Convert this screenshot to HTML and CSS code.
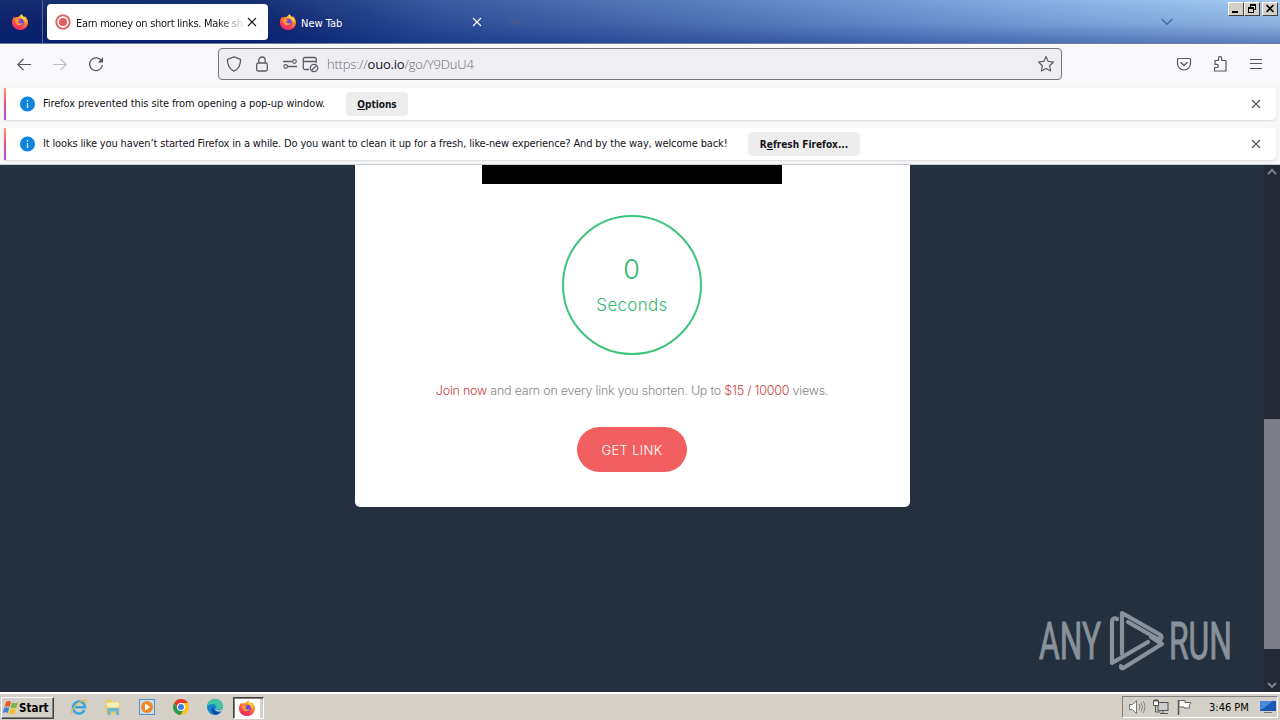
FILE: index.html
```html
<!DOCTYPE html>
<html lang="en">
<head>
<meta charset="utf-8">
<title>Earn money on short links</title>
<link rel="stylesheet" href="styles.css">
</head>
<body>
<svg class="defs" width="0" height="0" aria-hidden="true">
  <defs>
    <linearGradient id="ffg" x1="0.8" y1="0" x2="0.3" y2="1"><stop offset="0" stop-color="#ffe14a"/><stop offset=".4" stop-color="#ff8a2a"/><stop offset=".75" stop-color="#fb3e50"/><stop offset="1" stop-color="#e3246e"/></linearGradient>
    <symbol id="fox" viewBox="0 0 16 16">
      <path d="M9.6 0c.3 1.500 1.500 2.200 2.500 3.200.5-.1.6-.9.600-1.200C14.500 3.600 16 6 16 8.400 16 12.700 12.400 16 8 16S0 12.700 0 8.500C0 6 .8 4 2.200 2.400c0 .6.100 1.100.4 1.500C3.600 3 5 3 6 3.300 7.200 2.400 8.200 1.500 9.600 0z" fill="url(#ffg)"/>
      <circle cx="8.300" cy="8.300" r="3.500" fill="#7542e5"/>
      <path d="M3 5.500c2-.8 3.400.1 5.200.6-.3 1-1.700 1-2 1.700.6 1.800 3 2.300 4.800.9-.8 2.900-5.300 3.500-7 .8C3.200 8.300 3 7 3 5.500z" fill="#ff9a30"/>
      <path d="M9.600 0c.3 1.500 1.500 2.200 2.500 3.200 1.500 1.700 2 3.800 1.300 5.800-.4-2.400-1.800-4-3.500-4.800C8.700 3.300 8.600 1.600 9.600 0z" fill="#ffd83f"/>
    </symbol>
    <symbol id="cross" viewBox="0 0 10 10"><path d="M1 1l8 8M9 1l-8 8" fill="none" stroke="currentColor" stroke-width="1.100"/></symbol>
  </defs>
</svg>
<header class="tabbar">
  <div class="pinned"><svg width="16" height="16"><use href="#fox"/></svg></div>
  <div class="tab tab-active">
    <svg width="16" height="16" viewBox="0 0 16 16"><circle cx="8" cy="8" r="6.700" fill="#fff" stroke="#dd6a6a" stroke-width="2"/><circle cx="8" cy="8" r="4" fill="#e25d5d"/></svg>
    <span class="tab-title t-earn">Earn money on short links. Make sh</span>
    <svg class="tab-x" width="10" height="10"><use href="#cross"/></svg>
  </div>
  <div class="tab tab-idle">
    <svg width="16" height="16"><use href="#fox"/></svg>
    <span class="tab-title">New Tab</span>
    <svg class="tab-x" width="10" height="10"><use href="#cross"/></svg>
  </div>
  <svg class="plus" width="10" height="10" viewBox="0 0 10 10"><path d="M5 0v10M0 5h10" stroke="#525d7c"/></svg>
  <svg class="chev" width="12" height="8" viewBox="0 0 12 8"><path d="M.7 1L6 6.300 11.300 1" fill="none" stroke="#4b6a9c" stroke-width="1.400"/></svg>
  <div class="winbtns">
    <div class="wb"><svg width="14" height="12" viewBox="0 0 14 12"><path d="M3 8h6v2H3z"/></svg></div>
    <div class="wb"><svg width="14" height="12" viewBox="0 0 14 12"><path d="M5 1h6v6H9V6h1V3H6v1H5zM3 4h6v6H3zM4 6v3h4V6z" fill-rule="evenodd"/></svg></div>
    <div class="wb wb-close"><svg width="14" height="12" viewBox="0 0 14 12"><path d="M3.500 2l7 7M10.500 2l-7 7" stroke="#000" stroke-width="1.600"/></svg></div>
  </div>
</header>
<nav class="toolbar">
  <svg class="back" width="16" height="16" viewBox="0 0 16 16"><path d="M15 8.500H2M7.500 3L1.800 8.500l5.700 5.500" fill="none" stroke="#55555e" stroke-width="1.200"/></svg>
  <svg class="fwd" width="16" height="16" viewBox="0 0 16 16"><path d="M1 8.500h13M8.500 3L14.200 8.500l-5.700 5.500" fill="none" stroke="#c2c2c8" stroke-width="1.200"/></svg>
  <svg class="reload" width="16" height="16" viewBox="0 0 16 16"><path d="M13.600 5A6.400 6.400 0 1 0 14.400 9" fill="none" stroke="#55555e" stroke-width="1.300"/><path d="M15 1.300v5.200H9.800z" fill="#55555e"/></svg>
  <div class="urlbar">
    <svg width="16" height="16" viewBox="0 0 16 16"><path d="M8 .9l6.500 2.500c.2 5-1.500 9.500-6.500 11.700C3 12.900 1.300 8.400 1.500 3.400z" fill="none" stroke="#5b5b66" stroke-width="1.300" stroke-linejoin="round"/></svg>
    <svg class="lock" width="16" height="16" viewBox="0 0 16 16"><rect x="2.700" y="7" width="10.600" height="8" rx="1.500" fill="none" stroke="#5b5b66" stroke-width="1.300"/><path d="M4.800 7V4.200a3.200 3.200 0 0 1 6.400 0V7" fill="none" stroke="#5b5b66" stroke-width="1.300"/></svg>
    <svg class="perm" width="16" height="16" viewBox="0 0 16 16"><path d="M1 5.500h9M6 10.500h9" stroke="#5b5b66" stroke-width="1.300"/><circle cx="12.500" cy="5.500" r="1.800" fill="none" stroke="#5b5b66" stroke-width="1.200"/><circle cx="3.700" cy="10.500" r="1.800" fill="none" stroke="#5b5b66" stroke-width="1.200"/></svg>
    <svg class="popup" width="17" height="17" viewBox="0 0 17 17"><path d="M7 13.500H3A1.700 1.700 0 0 1 1.300 12V3A1.700 1.700 0 0 1 3 1.500h9.500A1.700 1.700 0 0 1 14.200 3v4M1.300 5.500h13" fill="none" stroke="#5b5b66" stroke-width="1.300"/><circle cx="12" cy="12" r="3.700" fill="#efeff3" stroke="#5b5b66" stroke-width="1.300"/><path d="M9.500 14.500l5-5" stroke="#5b5b66" stroke-width="1.200"/></svg>
    <span class="url">https://<b>ouo.io</b>/go/Y9DuU4</span>
    <svg class="star" width="18" height="18" viewBox="0 0 18 18"><path d="M9 1.500l2.200 4.900 5.300.6-3.900 3.700 1 5.300L9 13.400 4.400 16l1-5.300L1.500 7l5.300-.6z" fill="none" stroke="#5b5b66" stroke-width="1.200" stroke-linejoin="round"/></svg>
  </div>
  <div class="tools">
    <svg width="16" height="16" viewBox="0 0 16 16"><path d="M2.500 2.500h11a1 1 0 0 1 1 1v4a6.500 6.500 0 0 1-13 0v-4a1 1 0 0 1 1-1z" fill="none" stroke="#55555e" stroke-width="1.200"/><path d="M4.700 6.300L8 9.500l3.300-3.200" fill="none" stroke="#55555e" stroke-width="1.300"/></svg>
    <svg width="16" height="16" viewBox="0 0 16 16"><path d="M3 4.500h3.500V2.300a1.600 1.600 0 0 1 3.200 0v2.200h4.300V15H2.500V11.500h2.200a1.500 1.500 0 0 0 0-3.200H3z" fill="none" stroke="#55555e" stroke-width="1.200" stroke-linejoin="round"/></svg>
    <svg width="16" height="16" viewBox="0 0 16 16"><path d="M2 3.500h12M2 7.500h12M2 12.500h12" stroke="#55555e" stroke-width="1.200"/></svg>
  </div>
</nav>
<section class="notices">
  <div class="notice">
    <svg width="16" height="16" viewBox="0 0 16 16"><circle cx="7.500" cy="8" r="7.500" fill="#0a84e0"/><path d="M7.500 4v1.500M7.500 7v5" stroke="#fff" stroke-width="1.200"/></svg>
    <span class="msg m1">Firefox prevented this site from opening a pop-up window.</span>
    <button class="btn b1"><u>O</u>ptions</button>
    <svg class="nx" width="10" height="10"><use href="#cross"/></svg>
  </div>
  <div class="notice">
    <svg width="16" height="16" viewBox="0 0 16 16"><circle cx="7.500" cy="8" r="7.500" fill="#0a84e0"/><path d="M7.500 4v1.500M7.500 7v5" stroke="#fff" stroke-width="1.200"/></svg>
    <span class="msg m2">It looks like you haven’t started Firefox in a while. Do you want to clean it up for a fresh, like-new experience? And by the way, welcome back!</span>
    <button class="btn b2">R<u>e</u>fresh Firefox...</button>
    <svg class="nx" width="10" height="10"><use href="#cross"/></svg>
  </div>
</section>
<div class="viewport">
  <main class="page">
    <div class="card">
      <div class="ad"></div>
      <div class="timer"><span class="num">0</span><span class="sec">Seconds</span></div>
      <p class="join"><em>Join now</em> and earn on every link you shorten. Up to <em>$15 / 10000</em> views.</p>
      <button class="get"><span>GET LINK</span></button>
    </div>
    <svg class="watermark" width="210" height="70" viewBox="0 0 210 70">
      <g fill="#89919b" stroke="#89919b" stroke-width="1" font-family="Roboto" font-size="51">
        <text x="2" y="51" textLength="62" lengthAdjust="spacingAndGlyphs">ANY</text>
        <text x="132" y="51" textLength="63" lengthAdjust="spacingAndGlyphs">RUN</text>
      </g>
      <g fill="none" stroke="#89919b" stroke-width="4.200" stroke-linejoin="round" stroke-linecap="round">
        <path d="M80 11Q75 9 75 14V55L111 34"/>
        <path d="M85 46V5L122 26Q126 29 124 31Q122 32 119 30L91 14"/>
        <path d="M114 29L125 36L88 59Q84 62 84 58"/>
      </g>
    </svg>
  </main>
  <div class="scroll">
    <svg width="16" height="14" viewBox="0 0 16 14"><path d="M4 9l4-4 4 4" fill="none" stroke="#788089" stroke-width="2"/></svg>
    <div class="thumb"></div>
    <svg class="down" width="16" height="14" viewBox="0 0 16 14"><path d="M4 5l4 4 4-4" fill="none" stroke="#788089" stroke-width="2"/></svg>
  </div>
</div>
<footer class="taskbar">
  <div class="start">
    <svg width="17" height="16" viewBox="0 0 17 16"><path d="M4 2q3-2 5 0L7.500 7q-2-1.500-5 0z" fill="#e8572b"/><path d="M10 2.500q3 1.500 6 0L14.500 7.500q-3 1.500-6 0z" fill="#7cb843"/><path d="M2.200 8q3-1.500 5 0L5.700 13q-2-1.500-5 0z" fill="#3d87cf"/><path d="M8.200 8.500q3 1.500 6 0L12.700 13.500q-3 1.500-6 0z" fill="#f6c32c"/></svg>
    <span>Start</span>
  </div>
  <div class="quick">
    <svg width="18" height="18" viewBox="0 0 18 18"><path d="M14.500 12A6 6 0 1 1 15 9.300H5" fill="none" stroke="#3da5dc" stroke-width="2.600"/><path d="M2 15.500C-.5 13 9 2 16 2.200c2 .5-1 4-1 4" fill="none" stroke="#e8bd43" stroke-width="1.200"/></svg>
    <svg width="18" height="18" viewBox="0 0 18 18"><path d="M1.500 2h6l1 2h7.500v12H1.500z" fill="#eccb65"/><path d="M3 4.500h12v5H3z" fill="#f8efb6"/><path d="M3.500 17v-7h11.500v7h-3v-3.500h-5.500V17z" fill="#6ab6dc"/></svg>
    <svg width="18" height="18" viewBox="0 0 18 18"><rect x="1.500" y="1.500" width="15" height="15" fill="#c4def2" stroke="#5c93c4"/><circle cx="9" cy="9" r="6" fill="#f48620"/><path d="M7 5.500l5.500 3.500L7 12.500z" fill="#fff"/></svg>
    <svg width="18" height="18" viewBox="0 0 18 18"><circle cx="9" cy="9" r="8" fill="#fbc51d"/><path d="M2.100 5A8 8 0 0 1 16 5H9L6 11z" fill="#e33b2e"/><path d="M2.100 5A8 8 0 0 0 8.500 17L12 11 6 11z" fill="#279b4a"/><circle cx="9" cy="9" r="4" fill="#fff"/><circle cx="9" cy="9" r="3" fill="#3f7ee8"/></svg>
    <svg width="18" height="18" viewBox="0 0 18 18"><circle cx="9" cy="9" r="8" fill="#1685cf"/><path d="M1.200 8C2 3 5 1 9 1c5 0 8 3.500 8 7s-6 4.500-7 2.500c2-5-5-6-8.800-2.500z" fill="#42c5a0"/><path d="M7.500 9c-1 3 2 6 7 4.500-1 1.700-3 3-5 3.300C5 15 4 10 7.500 9z" fill="#0c4d9b"/><path d="M10 10.500c0 2 4 3 7-.5-.2 2-1 3-2 3.300-3 1-7-1-5-2.800z" fill="#d4d0c8"/></svg>
  </div>
  <div class="task"><svg width="16" height="16"><use href="#fox"/></svg></div>
  <div class="tray">
    <svg width="18" height="16" viewBox="0 0 18 16"><path d="M1.500 5.500h3l4-4v13l-4-4h-3z" fill="#fff" stroke="#777"/><path d="M11 5q2 3 0 6M13 3.500q3 4.500 0 9M15 2q4 6 0 12" fill="none" stroke="#888"/></svg>
    <svg width="18" height="16" viewBox="0 0 18 16"><rect x="6" y="3.500" width="10" height="8" fill="#ccc" stroke="#555"/><path d="M8 14.500h8M11 12v2M3.500 6v7h5" fill="none" stroke="#555"/><path d="M1.500 1.500h5v5h-5zM3 0v3M5 0v3" fill="#fff" stroke="#555"/></svg>
    <svg width="18" height="16" viewBox="0 0 18 16"><path d="M2.500 1v15" stroke="#555" stroke-width="1.500"/><path d="M3 1.500h6v2h6l-2 3 1 2.500H8V8H3z" fill="#fff" stroke="#666"/></svg>
    <span class="clock">3:46 PM</span>
    <svg class="desk" width="16" height="14" viewBox="0 0 16 14"><path d="M0 1h16v10H0z" fill="#1b57b5"/><path d="M0 1h13L4 8 0 10z" fill="#4788dc"/><path d="M4 12h8v1H4z" fill="#777"/></svg>
  </div>
</footer>
</body>
</html>
```
FILE: styles.css
```css
* { box-sizing: border-box; }
body { margin: 0; width: 1280px; height: 720px; overflow: hidden; display: flex; flex-direction: column; font-family: "DejaVu Sans Condensed", "DejaVu Sans", sans-serif; font-size: 11px; color: #15141a; background: #f9f9fb; }
.defs { position: absolute; }
svg { display: block; flex: none; }
button { border: 0; font: inherit; margin: 0; }

.tabbar { height: 44px; flex: none; display: flex; align-items: flex-start; border-bottom: 1px solid #6e7f9e; background: linear-gradient(180deg, rgba(255,255,255,.04), rgba(0,20,100,.12) 55%, rgba(0,25,115,.42)), linear-gradient(90deg, #0d246b 0, #0e266e 20%, #31549c 34%, #4c72b3 50%, #6d98d4 70%, #8ab6e8 86%, #a0c8f0 100%); }
.pinned { width: 43px; height: 43px; padding: 14px 0 0 12px; border-right: 1px solid #53679b; }
.tab { height: 36px; margin-top: 4px; display: flex; align-items: center; border-radius: 4px; }
.tab-active { margin-left: 4px; width: 221px; background: #fff; padding: 0 11px 0 8px; color: #15141a; }
.tab-idle { width: 221px; margin-left: 4px; padding: 0 11px 0 8px; color: #fff; }
.tab-title { margin-left: 5px; width: 170px; margin-right: -4px; padding-top: 2px; white-space: nowrap; }
.t-earn { letter-spacing: -.28px; -webkit-mask-image: linear-gradient(90deg, #000 142px, transparent 170px); mask-image: linear-gradient(90deg, #000 142px, transparent 170px); }
.tab-x { margin-left: auto; }
.plus { margin: 18px 0 0 17px; }
.chev { margin: 18px 0 0 auto; }
.winbtns { display: flex; margin: 2px 2px 0 55px; }
.wb { width: 16px; height: 14px; background: #d4d0c8; border: 1px solid; border-color: #fff #404040 #404040 #fff; }
.wb-close { margin-left: 2px; }

.toolbar { height: 40px; flex: none; display: flex; align-items: center; background: #f9f9fb; padding-left: 16px; }
.fwd, .reload { margin-left: 20px; }
.urlbar { margin-left: 114px; width: 844px; height: 32px; border: 1px solid #76767e; border-radius: 4px; background: #efeff3; display: flex; align-items: center; padding: 0 6px 0 7px; }
.lock { margin-left: 12px; }
.perm { margin-left: 12px; }
.popup { margin-left: 4px; }
.url { margin-left: 8px; font: 300 13px "Open Sans", sans-serif; letter-spacing: -.2px; color: #6c6c74; }
.url b { font-weight: 400; color: #15141a; }
.star { margin-left: auto; }
.tools { margin-left: 114px; display: flex; gap: 20px; }

.notices { height: 81px; flex: none; padding: 4px 4px 0; display: flex; flex-direction: column; gap: 8px; background: #f7f7f8; border-bottom: 1px solid #c5ccd2; }
.notice { height: 32px; width: 1272px; display: flex; align-items: center; background: linear-gradient(180deg, #ffa05c, #ef5082 45%, #a64be6) 0 0 / 2px 100% no-repeat, #fff; border-radius: 0 4px 4px 0; padding: 0 15px 0 16px; box-shadow: 0 1px 2px rgba(58,57,68,.15); }
.msg { margin-left: 7px; padding-bottom: 2px; white-space: nowrap; }
.m1 { width: 303px; letter-spacing: -.1px; }
.m2 { width: 705px; letter-spacing: -.145px; }
.btn { height: 24px; border-radius: 4px; background: #ededee; font-weight: 700; font-size: 10px; padding: 1px 0 0; color: #15141a; white-space: nowrap; }
.b1 { width: 62px; }
.b2 { width: 112px; }
.nx { margin-left: auto; color: #555; }

.viewport { height: 527px; flex: none; display: flex; background: #25303e; }
.page { width: 1264px; display: flex; justify-content: center; align-items: flex-start; position: relative; }
.card { width: 555px; height: 342px; margin-left: 1px; padding-right: 1px; background: #fff; border-radius: 0 0 5px 5px; display: flex; flex-direction: column; align-items: center; font-family: Inter, sans-serif; font-weight: 300; }
.ad { width: 300px; height: 19px; background: #000; }
.timer { width: 140px; height: 140px; margin-top: 31px; border: 2px solid #3cc47c; border-radius: 50%; color: #35b870; display: flex; flex-direction: column; align-items: center; }
.num { font-size: 27px; line-height: 34px; margin: 36px 1px 0 0; }
.sec { font-size: 17px; line-height: 22px; letter-spacing: .3px; margin-top: 7px; }
.join { margin: 27px 0 0; font-size: 12.5px; line-height: 18px; letter-spacing: -.23px; color: #888; white-space: nowrap; }
.join em { font-style: normal; color: #c93d3d; }
.get { margin-top: 27px; width: 110px; height: 45px; border-radius: 23px; background: #f15f60; color: #fff; font-size: 13px; letter-spacing: .3px; padding: 0; }
.watermark { position: absolute; left: 1037px; top: 443px; }
.scroll { width: 16px; background: #222935; display: flex; flex-direction: column; }
.thumb { height: 230px; margin-top: 240px; background: #7c7f87; }
.down { margin-top: auto; }

.taskbar { height: 28px; flex: none; display: flex; align-items: center; background: #d4d0c8; border-top: 2px solid #fff; padding: 0 2px 0 1px; }
.start { width: 53px; height: 22px; margin-top: 1px; display: flex; align-items: center; border: 1px solid; border-color: #fff #404040 #404040 #fff; box-shadow: inset -1px -1px #808080; padding-left: 0; font-weight: 700; font-size: 11.5px; color: #000; }
.quick { display: flex; gap: 16px; margin-left: 16px; }
.task { margin-left: 9px; width: 31px; height: 22px; margin-top: 1px; border: 1px solid; border-color: #404040 #fff #fff #404040; box-shadow: inset 1px 1px #808080, inset -3px 0 #d4d0c8; background: #fff; padding: 2px 0 0 5px; }
.tray { margin-left: auto; width: 156px; height: 22px; border: 1px solid; border-color: #808080 #fff #fff #808080; display: flex; align-items: center; padding: 0 1px 0 5px; gap: 6px; color: #000; }
.clock { margin-left: 9px; white-space: nowrap; }
.desk { margin-left: auto; }
```
